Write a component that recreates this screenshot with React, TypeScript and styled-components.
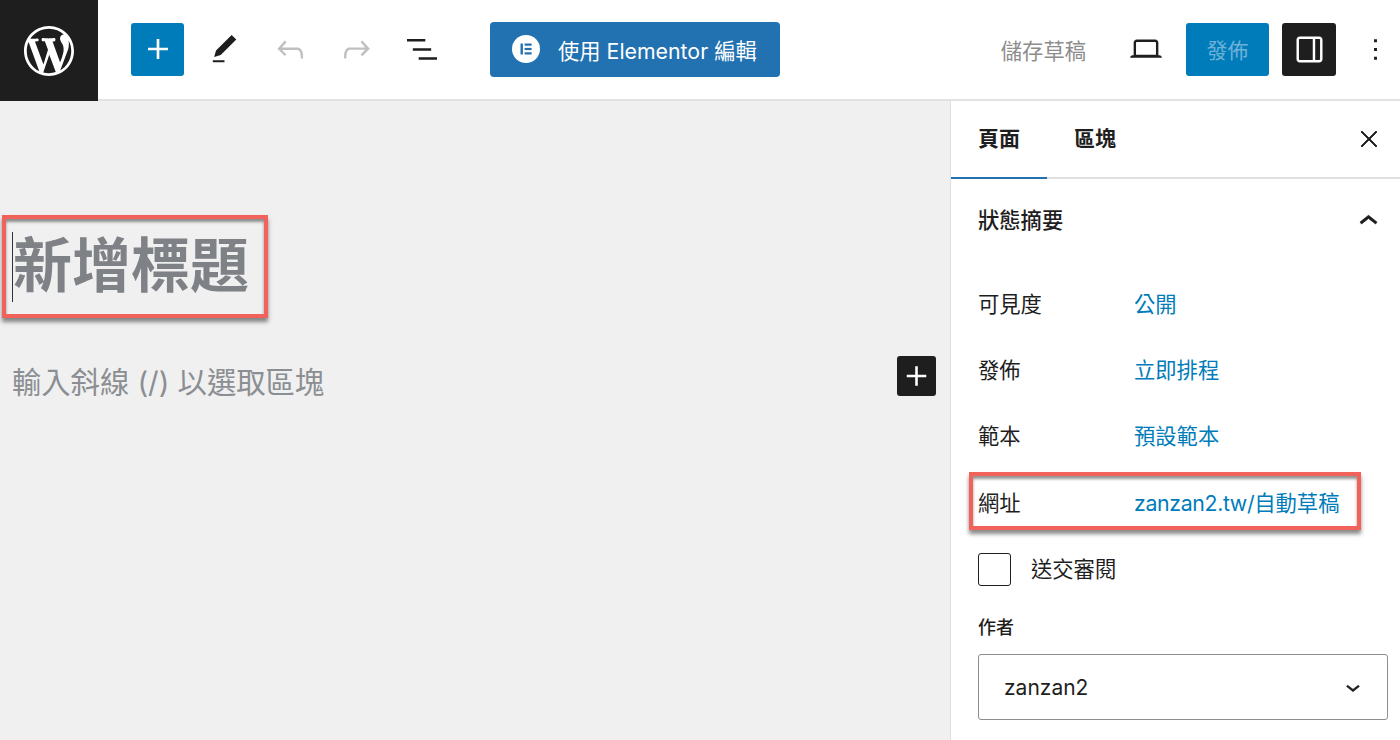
import React from "react";
import styled, { createGlobalStyle } from "styled-components";

const FONT = `"Inter", "Noto Sans CJK TC", "Noto Sans", sans-serif`;

const GlobalStyle = createGlobalStyle`
  html, body {
    margin: 0;
    padding: 0;
    height: 740px;
    overflow: hidden;
    background: #fff;
    font-family: ${FONT};
  }
  * { box-sizing: border-box; }
`;

const Page = styled.div`
  width: 1400px;
  height: 740px;
  display: flex;
  flex-direction: column;
  overflow: hidden;
`;

const TopBar = styled.header`
  flex: 0 0 101px;
  display: flex;
  align-items: center;
  padding-bottom: 1px;
  background: #fff;
  border-bottom: 2px solid #e2e2e2;
`;

const LogoBlock = styled.div`
  width: 98px;
  height: 101px;
  margin-bottom: -3px;
  flex: none;
  align-self: flex-start;
  display: flex;
  align-items: center;
  justify-content: center;
  background: #1e1e1e;
  color: #fff;
`;

const ToolGroup = styled.div`
  display: flex;
  align-items: center;
  margin-left: 33px;
`;

const AddButton = styled.div`
  width: 53px;
  height: 53px;
  display: flex;
  align-items: center;
  justify-content: center;
  border-radius: 3px;
  background: #007cba;
  color: #fff;
  margin-right: 14px;
`;

const ToolIcon = styled.div<{ $muted?: boolean }>`
  width: 52px;
  height: 53px;
  margin-right: 14px;
  display: flex;
  align-items: center;
  justify-content: center;
  color: ${(p) => (p.$muted ? "#c0c0c0" : "#1e1e1e")};
`;

const ElementorButton = styled.div`
  width: 290px;
  height: 55px;
  margin-left: 28px;
  display: flex;
  align-items: center;
  padding-left: 22px;
  gap: 18px;
  border-radius: 4px;
  background: #2271b1;
  color: #fff;
  font-size: 21.3px;
  white-space: nowrap;
`;

const ElementorBadge = styled.span`
  width: 28px;
  height: 28px;
  flex: none;
  border-radius: 50%;
  background: #fff;
  display: flex;
  align-items: center;
  justify-content: center;
`;

const RightTools = styled.div`
  margin-left: auto;
  display: flex;
  align-items: center;
`;

const SaveDraft = styled.span`
  color: #8d8d8d;
  font-size: 21.3px;
  margin-right: 41px;
`;

const PreviewIcon = styled.div`
  width: 38px;
  height: 38px;
  margin-right: 21px;
  color: #1e1e1e;
`;

const PublishButton = styled.div`
  width: 83px;
  height: 53px;
  display: flex;
  align-items: center;
  justify-content: center;
  border-radius: 3px;
  background: #007cba;
  color: #6fb2d9;
  font-size: 21px;
  margin-right: 13px;
`;

const SidebarToggle = styled.div`
  width: 54px;
  height: 53px;
  display: flex;
  align-items: center;
  justify-content: center;
  border-radius: 3px;
  background: #1e1e1e;
  color: #fff;
  margin-right: 22px;
`;

const MoreIcon = styled.div`
  width: 35px;
  height: 35px;
  margin-right: 7px;
  color: #1e1e1e;
`;

const Workspace = styled.div`
  flex: 1;
  display: flex;
  min-height: 0;
`;

const Canvas = styled.main`
  width: 950px;
  flex: none;
  background: #f0f0f0;
  padding: 114px 14px 0 2px;
`;

const Callout = styled.div`
  border: 4px solid #f0625a;
  box-shadow: 0 4px 4px rgba(60, 60, 60, 0.6), inset 0 3px 3px rgba(60, 60, 60, 0.55);
`;

const TitleFrame = styled(Callout)`
  width: 266px;
  height: 103px;
  display: flex;
  align-items: center;
  padding-left: 6px;
`;

const PostTitle = styled.h1`
  margin: 0;
  height: 70px;
  border-left: 1px solid #333;
  font-size: 59px;
  line-height: 68px;
  font-weight: 700;
  color: #7e8185;
  white-space: nowrap;
`;

const BlockRow = styled.div`
  display: flex;
  align-items: flex-start;
  justify-content: space-between;
  margin-top: 38px;
  padding-left: 10px;
`;

const Placeholder = styled.p`
  margin: 7px 0 0;
  font-size: 29.3px;
  line-height: 40px;
  color: #8b8e92;
  white-space: nowrap;
`;

const InserterButton = styled.div`
  width: 39px;
  height: 40px;
  display: flex;
  align-items: center;
  justify-content: center;
  border-radius: 3px;
  background: #1e1e1e;
  color: #fff;
`;

const Sidebar = styled.aside`
  flex: 1;
  background: #fff;
  border-left: 1.5px solid #e0e0e0;
  color: #1e1e1e;
  font-size: 21.3px;
  overflow: hidden;
`;

const TabBar = styled.div`
  height: 78px;
  display: flex;
  align-items: stretch;
  border-bottom: 2px solid #e0e0e0;
`;

const Tab = styled.div<{ $active?: boolean }>`
  width: ${(p) => (p.$active ? 96 : 111)}px;
  display: flex;
  align-items: center;
  padding: 0 0 4px 27px;
  font-size: 21px;
  font-weight: 600;
  margin-bottom: -2px;
  border-bottom: 2px solid ${(p) => (p.$active ? "#2271b1" : "transparent")};
`;

const CloseSlot = styled.div`
  margin-left: auto;
  margin-right: 14px;
  width: 35px;
  display: flex;
  align-items: center;
  justify-content: center;
`;

const Panel = styled.section`
  padding: 0 12px 0 27px;
`;

const PanelHeader = styled.div`
  height: 79px;
  display: flex;
  align-items: center;
  justify-content: space-between;
  padding-right: 1px;
  font-weight: 500;
`;

const ChevronSlot = styled.span`
  display: flex;
  margin-top: 5px;
`;

const Rows = styled.div`
  padding-top: 11px;
`;

const Row = styled.div`
  height: 66.4px;
  display: flex;
  align-items: center;
`;

const UrlRow = styled(Callout)`
  height: 58px;
  width: 392px;
  margin: 4px 0 5px -9px;
  padding-left: 5px;
  display: flex;
  align-items: center;
`;

const RowLabel = styled.span`
  width: 156px;
  flex: none;
`;

const RowLink = styled.span`
  color: #007cba;
  white-space: nowrap;
`;

const UrlHost = styled.span`
  letter-spacing: -0.35px;
`;

const ReviewRow = styled.div`
  height: 33px;
  margin-top: 23px;
  display: flex;
  align-items: center;
  gap: 20px;
`;

const CheckBox = styled.span`
  width: 33px;
  height: 33px;
  border: 1.5px solid #1e1e1e;
  border-radius: 3px;
  background: #fff;
`;

const ReviewLabel = styled.span`
  padding-bottom: 5px;
`;

const FieldLabel = styled.div`
  margin-top: 30px;
  font-size: 18px;
  line-height: 24px;
  font-weight: 500;
`;

const SelectBox = styled.div`
  margin-top: 14px;
  width: 410px;
  height: 66px;
  display: flex;
  align-items: center;
  justify-content: space-between;
  padding: 0 20px 0 25px;
  border: 1.5px solid #8d8d8d;
  border-radius: 3px;
  font-size: 21px;
`;

const Glyph = ({
  size = 35,
  d,
  vb = "0 0 24 24",
  bold = 0,
}: {
  size?: number;
  d: string;
  vb?: string;
  bold?: number;
}) => (
  <svg
    width={size}
    height={size}
    viewBox={vb}
    fill="currentColor"
    stroke={bold ? "currentColor" : "none"}
    strokeWidth={bold}
  >
    <path d={d} />
  </svg>
);

const PLUS = "M18 11.2h-5.2V6h-1.6v5.2H6v1.6h5.2V18h1.6v-5.2H18z";
const PENCIL = "M20.1 5.1L16.9 2 6.2 12.7l-1.3 4.4 4.5-1.3L20.1 5.1zM4 20.8h8v-1.5H4v1.5z";
const UNDO =
  "M18.3 11.7c-.6-.6-1.4-.9-2.3-.9H6.7l2.9-3.3-1.1-1-4.5 5L8.5 16l1-1-2.7-2.7H16c.5 0 .9.2 1.3.5 1 1 1 3.4 1 4.5v.3h1.5v-.2c0-1.5 0-4.3-1.5-5.7z";
const REDO =
  "M15.6 6.5l-1.1 1 2.9 3.3H8c-.9 0-1.7.3-2.3.9-1.4 1.5-1.4 4.2-1.4 5.6v.2h1.5v-.3c0-1.1 0-3.5 1-4.5.3-.3.7-.5 1.3-.5h9.2L14.5 15l1.1 1.1 4.6-4.6-4.6-5z";
const LIST_VIEW = "M3 6h11v1.5H3V6zm3.5 5.5h11V13h-11v-1.5zM21 17H10v1.5h11V17z";
const LAPTOP =
  "M20.5 16h-.7V8c0-1.1-.9-2-2-2H6.2c-1.1 0-2 .9-2 2v8h-.7c-.8 0-1.5.7-1.5 1.5h20c0-.8-.7-1.5-1.5-1.5zM5.7 8c0-.3.2-.5.5-.5h11.6c.3 0 .5.2.5.5v7.6H5.7V8z";
const SIDEBAR =
  "M18 4H6c-1.1 0-2 .9-2 2v12c0 1.1.9 2 2 2h12c1.1 0 2-.9 2-2V6c0-1.1-.9-2-2-2zM5.5 18V6c0-.3.2-.5.5-.5h8v13H6c-.3 0-.5-.2-.5-.5zm13 0c0 .3-.2.5-.5.5h-2.5v-13H18c.3 0 .5.2.5.5v12z";
const MORE = "M13 19h-2v-2h2v2zm0-6h-2v-2h2v2zm0-6h-2V5h2v2z";
const CLOSE = "M5 4l7 7 7-7 1 1-7 7 7 7-1 1-7-7-7 7-1-1 7-7-7-7z";
const CHEVRON_UP = "M6.5 12.4L12 8l5.5 4.4-.9 1.2L12 10l-4.5 3.6-1-1.2z";
const CHEVRON_DOWN = "M17.5 11.6L12 16l-5.5-4.4.9-1.2L12 14l4.5-3.6 1 1.2z";
const WORDPRESS =
  "M20 10c0-5.51-4.49-10-10-10C4.48 0 0 4.49 0 10c0 5.52 4.48 10 10 10 5.51 0 10-4.48 10-10zM7.78 15.37L4.37 6.22c.55-.02 1.17-.08 1.17-.08.5-.06.44-1.13-.06-1.11 0 0-1.45.11-2.37.11-.18 0-.37 0-.58-.01C4.12 2.69 6.87 1.11 10 1.11c2.33 0 4.45.87 6.05 2.34-.68-.11-1.65.39-1.65 1.58 0 .74.45 1.36.9 2.1.35.61.55 1.36.55 2.46 0 1.49-1.4 5-1.4 5l-3.03-8.37c.54-.02.82-.17.82-.17.5-.05.44-1.25-.06-1.22 0 0-1.44.12-2.38.12-.87 0-2.33-.12-2.33-.12-.5-.03-.56 1.2-.06 1.22l.92.08 1.26 3.41zM17.41 10c.24-.64.74-1.87.43-4.25.7 1.29 1.05 2.71 1.05 4.25 0 3.29-1.73 6.24-4.4 7.78.97-2.59 1.94-5.2 2.92-7.78zM6.1 18.09C3.12 16.65 1.11 13.53 1.11 10c0-1.3.23-2.48.72-3.59C3.25 10.3 4.67 14.2 6.1 18.09zm4.03-6.63l2.58 6.98c-.86.29-1.76.45-2.71.45-.79 0-1.57-.11-2.29-.33.81-2.38 1.62-4.74 2.42-7.1z";

const ElementorMark = () => (
  <svg width="14" height="14" viewBox="0 0 14 14" fill="#2271b1">
    <rect x="1.5" y="1.5" width="2.4" height="11" />
    <rect x="5.6" y="1.5" width="7" height="2.2" />
    <rect x="5.6" y="5.9" width="7" height="2.2" />
    <rect x="5.6" y="10.3" width="7" height="2.2" />
  </svg>
);

export default function App() {
  return (
    <Page>
      <GlobalStyle />
      <TopBar>
        <LogoBlock>
          <Glyph size={50} vb="0 0 20 20" d={WORDPRESS} />
        </LogoBlock>
        <ToolGroup>
          <AddButton>
            <Glyph size={40} d={PLUS} />
          </AddButton>
          <ToolIcon>
            <Glyph d={PENCIL} />
          </ToolIcon>
          <ToolIcon $muted>
            <Glyph size={39} d={UNDO} />
          </ToolIcon>
          <ToolIcon $muted>
            <Glyph size={39} d={REDO} />
          </ToolIcon>
          <ToolIcon>
            <Glyph size={40} d={LIST_VIEW} />
          </ToolIcon>
        </ToolGroup>
        <ElementorButton>
          <ElementorBadge>
            <ElementorMark />
          </ElementorBadge>
          使用 Elementor 編輯
        </ElementorButton>
        <RightTools>
          <SaveDraft>儲存草稿</SaveDraft>
          <PreviewIcon>
            <Glyph size={38} d={LAPTOP} />
          </PreviewIcon>
          <PublishButton>發佈</PublishButton>
          <SidebarToggle>
            <Glyph size={39} d={SIDEBAR} />
          </SidebarToggle>
          <MoreIcon>
            <Glyph d={MORE} />
          </MoreIcon>
        </RightTools>
      </TopBar>
      <Workspace>
        <Canvas>
          <TitleFrame>
            <PostTitle>新增標題</PostTitle>
          </TitleFrame>
          <BlockRow>
            <Placeholder>輸入斜線 (/) 以選取區塊</Placeholder>
            <InserterButton>
              <Glyph size={42} d={PLUS} />
            </InserterButton>
          </BlockRow>
        </Canvas>
        <Sidebar>
          <TabBar>
            <Tab $active>頁面</Tab>
            <Tab>區塊</Tab>
            <CloseSlot>
              <Glyph size={24} d={CLOSE} bold={0.8} />
            </CloseSlot>
          </TabBar>
          <Panel>
            <PanelHeader>
              狀態摘要
              <ChevronSlot>
                <Glyph size={37} d={CHEVRON_UP} bold={0.5} />
              </ChevronSlot>
            </PanelHeader>
            <Rows>
              <Row>
                <RowLabel>可見度</RowLabel>
                <RowLink>公開</RowLink>
              </Row>
              <Row>
                <RowLabel>發佈</RowLabel>
                <RowLink>立即排程</RowLink>
              </Row>
              <Row>
                <RowLabel>範本</RowLabel>
                <RowLink>預設範本</RowLink>
              </Row>
              <UrlRow>
                <RowLabel>網址</RowLabel>
                <RowLink>
                  <UrlHost>zanzan2.tw/</UrlHost>自動草稿
                </RowLink>
              </UrlRow>
            </Rows>
            <ReviewRow>
              <CheckBox />
              <ReviewLabel>送交審閱</ReviewLabel>
            </ReviewRow>
            <FieldLabel>作者</FieldLabel>
            <SelectBox>
              zanzan2
              <Glyph size={28} d={CHEVRON_DOWN} bold={0.5} />
            </SelectBox>
          </Panel>
        </Sidebar>
      </Workspace>
    </Page>
  );
}
